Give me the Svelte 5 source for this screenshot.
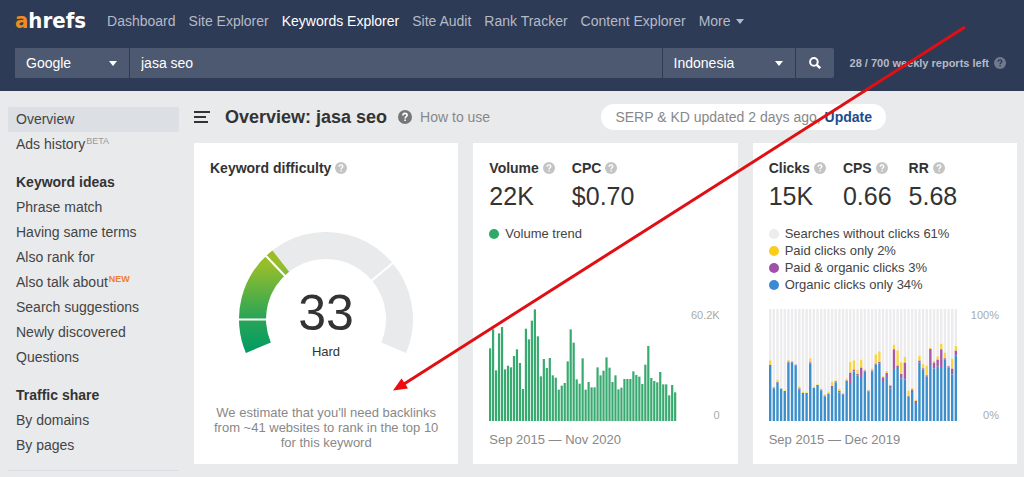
<script lang="ts">
	let engine = $state('Google');
	let country = $state('Indonesia');
	let query = $state('jasa seo');

	const nav = ['Dashboard', 'Site Explorer', 'Keywords Explorer', 'Site Audit', 'Rank Tracker', 'Content Explorer'];

	const menu = [
		{ title: '', items: [{ name: 'Overview', active: true }, { name: 'Ads history', badge: 'BETA' }] },
		{
			title: 'Keyword ideas',
			items: [
				{ name: 'Phrase match' },
				{ name: 'Having same terms' },
				{ name: 'Also rank for' },
				{ name: 'Also talk about', badge: 'NEW' },
				{ name: 'Search suggestions' },
				{ name: 'Newly discovered' },
				{ name: 'Questions' }
			]
		},
		{ title: 'Traffic share', items: [{ name: 'By domains' }, { name: 'By pages' }] }
	];

	// monthly volume, in thirds of a chart unit
	const volume = [
		218, 275, 152, 263, 282, 155, 166, 161, 195, 215, 174, 96, 277, 245, 301, 335, 254, 134, 186, 159, 189,
		137, 130, 94, 106, 114, 179, 275, 235, 125, 112, 188, 94, 117, 101, 101, 161, 137, 151, 191, 160, 117,
		137, 95, 100, 126, 126, 126, 149, 138, 133, 111, 169, 225, 129, 120, 116, 147, 110, 110, 77, 108, 86
	];

	// stacked: organic, + paid & organic, + paid
	const clicks = [
		[165, 168, 182], [98, 100, 103], [115, 117, 124], [97, 97, 98], [90, 90, 92], [176, 178, 183],
		[175, 178, 178], [166, 169, 169], [95, 98, 104], [81, 84, 88], [81, 84, 86], [172, 176, 188],
		[99, 99, 103], [105, 108, 110], [92, 94, 96], [74, 76, 80], [81, 82, 88], [102, 105, 118],
		[116, 119, 122], [86, 90, 97], [79, 81, 84], [117, 121, 127], [114, 145, 177], [149, 154, 182],
		[137, 141, 154], [129, 160, 184], [149, 151, 155], [88, 91, 94], [149, 152, 158], [169, 172, 200],
		[173, 177, 209], [120, 131, 134], [132, 144, 150], [98, 106, 109], [156, 215, 229], [162, 166, 212],
		[128, 141, 176], [124, 175, 192], [73, 75, 91], [87, 94, 99], [51, 60, 64], [175, 181, 196],
		[154, 158, 171], [133, 137, 166], [168, 216, 220], [157, 175, 180], [163, 184, 194], [162, 215, 232],
		[184, 188, 205], [160, 164, 166], [140, 157, 187], [196, 211, 225]
	];

	const legend = [
		{ name: 'Searches without clicks 61%', color: 'none' },
		{ name: 'Paid clicks only 2%', color: 'paid' },
		{ name: 'Paid & organic clicks 3%', color: 'both' },
		{ name: 'Organic clicks only 34%', color: 'organic' }
	];

	function point(deg: number, r: number) {
		const a = ((157 + deg) * Math.PI) / 180;
		return `${(87 + r * Math.cos(a)).toFixed(2)} ${(87 + r * Math.sin(a)).toFixed(2)}`;
	}

	// ring segment, degrees counted clockwise from the lower left end
	function arc(from: number, to: number) {
		const large = to - from > 180 ? 1 : 0;
		return `M${point(from, 87)} A87 87 0 ${large} 1 ${point(to, 87)} L${point(to, 60)} A60 60 0 ${large} 0 ${point(from, 60)}Z`;
	}
</script>

{#snippet help()}
	<svg class="help" width="12" height="12" viewBox="0 0 12 12" aria-hidden="true">
		<circle cx="6" cy="6" r="6" fill="currentColor" />
		<path class="mark" d="M4.2 4.7C4.2 3.5 5 2.9 6 2.9S7.8 3.6 7.8 4.6C7.8 5.7 6.1 5.8 6.1 7.2M6.1 8.2V9.5" fill="none" stroke-width="1.4" />
	</svg>
{/snippet}

{#snippet caret()}
	<svg class="caret" width="8" height="5" viewBox="0 0 8 5" aria-hidden="true"><path d="M0 0h8L4 5z" fill="currentColor" /></svg>
{/snippet}

<div class="page">
	<header>
		<nav class="top">
			<a href="#home" class="logo"><span>a</span>hrefs</a>
			{#each nav as item}
				<a href="#nav" class:current={item === 'Keywords Explorer'}>{item}</a>
			{/each}
			<a href="#more" class="more">More {@render caret()}</a>
		</nav>
		<div class="search">
			<form onsubmit={(e) => e.preventDefault()}>
				<label class="pick engine">
					<select bind:value={engine} aria-label="Search engine"><option>Google</option><option>YouTube</option></select>
					{@render caret()}
				</label>
				<input type="text" bind:value={query} aria-label="Keywords" />
				<label class="pick country">
					<select bind:value={country} aria-label="Country"><option>Indonesia</option><option>Malaysia</option></select>
					{@render caret()}
				</label>
				<button aria-label="Search">
					<svg width="12" height="12" viewBox="0 0 12 12"><circle cx="4.9" cy="4.9" r="3.8" fill="none" stroke="currentColor" stroke-width="2" /><path d="M7.8 7.8l3.4 3.4" stroke="currentColor" stroke-width="2.4" /></svg>
				</button>
			</form>
			<span class="quota">28 / 700 weekly reports left {@render help()}</span>
		</div>
	</header>

	<div class="body">
		<aside>
			{#each menu as group}
				{#if group.title}<h2>{group.title}</h2>{/if}
				{#each group.items as item}
					<a href="#menu" class:active={item.active}>{item.name}{#if item.badge}<span class="badge" class:new={item.badge === 'NEW'}>{item.badge}</span>{/if}</a>
				{/each}
			{/each}
		</aside>

		<main>
			<div class="title-row">
				<button class="burger" aria-label="Toggle menu">
					<svg width="16" height="12" viewBox="0 0 16 12"><path d="M0 1h16M0 6h12M0 11h14" stroke="currentColor" stroke-width="2" /></svg>
				</button>
				<h1>Overview: jasa seo</h1>
				<a href="#help" class="how">{@render help()} How to use</a>
				<div class="updated">SERP &amp; KD updated 2 days ago, <a href="#update">Update</a></div>
			</div>

			<div class="cards">
				<section class="card">
					<h3>Keyword difficulty {@render help()}</h3>
					<svg class="gauge" width="174" height="128" viewBox="0 0 174 128">
						<defs>
							<linearGradient id="kd" x1="0" y1="121" x2="0" y2="18" gradientUnits="userSpaceOnUse">
								<stop offset="0" stop-color="#009b62" />
								<stop offset="0.35" stop-color="#2ba556" />
								<stop offset="0.85" stop-color="#95be2b" />
								<stop offset="1" stop-color="#9fbb28" />
							</linearGradient>
						</defs>
						<path d={arc(0, 226)} fill="#e9eaec" />
						<path d={arc(0, 75)} fill="url(#kd)" />
						{#each [22.6, 69.4, 163] as deg}
							<path d="M{point(deg, 59)} L{point(deg, 88)}" stroke="#fff" stroke-width="2" />
						{/each}
						<text class="score" x="87" y="98">33</text>
						<text class="level" x="87" y="124">Hard</text>
					</svg>
					<p class="estimate">We estimate that you'll need backlinks<br />from ~41 websites to rank in the top 10<br />for this keyword</p>
				</section>

				<section class="card">
					<div class="stats">
						<div><h3>Volume {@render help()}</h3><strong>22K</strong></div>
						<div><h3>CPC {@render help()}</h3><strong>$0.70</strong></div>
					</div>
					<ul><li><i class="dot volume"></i>Volume trend</li></ul>
					<div class="chart">
						<svg width="188" height="112" viewBox="0 0 188 112">
							{#each volume as v, i}
								<rect x={i * 2.985} y={112 - v / 3} width="2.2" height={v / 3} fill="#38aa70" />
							{/each}
						</svg>
						<div class="axis"><span>60.2K</span><span>0</span></div>
					</div>
					<p class="period">Sep 2015 — Nov 2020</p>
				</section>

				<section class="card">
					<div class="stats">
						<div><h3>Clicks {@render help()}</h3><strong>15K</strong></div>
						<div><h3>CPS {@render help()}</h3><strong>0.66</strong></div>
						<div><h3>RR {@render help()}</h3><strong>5.68</strong></div>
					</div>
					<ul>
						{#each legend as l}
							<li><i class="dot {l.color}"></i>{l.name}</li>
						{/each}
					</ul>
					<div class="chart">
						<svg width="188" height="112" viewBox="0 0 188 112">
							{#each clicks as [organic, both, paid], i}
								<rect x={i * 3.64} y="0" width="2.4" height={112 - paid / 3} fill="#ececee" />
								<rect x={i * 3.64} y={112 - paid / 3} width="2.4" height={(paid - both) / 3} fill="#f5d547" />
								<rect x={i * 3.64} y={112 - both / 3} width="2.4" height={(both - organic) / 3} fill="#a659a8" />
								<rect x={i * 3.64} y={112 - organic / 3} width="2.4" height={organic / 3} fill="#3d8fcb" />
							{/each}
						</svg>
						<div class="axis"><span>100%</span><span>0%</span></div>
					</div>
					<p class="period">Sep 2015 — Dec 2019</p>
				</section>
			</div>
		</main>
	</div>

	<svg class="arrow" width="1024" height="477" viewBox="0 0 1024 477" aria-hidden="true">
		<path d="M965 27L404 384" stroke="#e00f14" stroke-width="3" />
		<path d="M393 390.5L401.5 378.5L405 383.5L408 388.5Z" fill="#f00a0e" />
	</svg>
</div>

<style>
	:global(body) {
		margin: 0;
		background: #e9eaec;
	}
	.page {
		position: relative;
		font-family: 'Liberation Sans', Arial, sans-serif;
		font-size: 14px;
		line-height: 20px;
		color: #333;
		overflow: hidden;
	}
	a {
		color: inherit;
		text-decoration: none;
	}
	h1,
	h2,
	h3,
	p,
	ul {
		margin: 0;
		padding: 0;
	}
	.mark {
		stroke: #fff;
	}

	header {
		background: #2e3b56;
		color: #b4bac6;
		padding-bottom: 13px;
	}
	.top {
		display: flex;
		align-items: center;
		gap: 13px;
		height: 42px;
		padding: 0 15px;
		margin-bottom: 6px;
	}
	.logo {
		font-family: 'DejaVu Sans Condensed', 'DejaVu Sans', sans-serif;
		font-size: 22px;
		font-weight: bold;
		color: #fff;
		margin-right: 8px;
	}
	.logo span {
		color: #f08b1d;
	}
	.current {
		color: #fff;
	}
	.more {
		display: flex;
		align-items: center;
		gap: 5px;
	}
	.search {
		display: flex;
		align-items: center;
		gap: 16px;
		padding: 0 18px 0 15px;
	}
	form {
		flex: 1;
		display: flex;
		gap: 1px;
		height: 30px;
	}
	form select,
	form input,
	form button {
		box-sizing: border-box;
		appearance: none;
		border: 0;
		border-radius: 0;
		margin: 0;
		height: 30px;
		padding: 0 11px;
		background: #4d5970;
		color: #fff;
		font: inherit;
	}
	form input {
		flex: 1;
		min-width: 0;
	}
	form select {
		width: 100%;
	}
	form button {
		display: flex;
		align-items: center;
		justify-content: center;
		width: 38px;
		border-radius: 0 2px 2px 0;
	}
	.pick {
		position: relative;
		color: #fff;
	}
	.pick .caret {
		position: absolute;
		right: 12px;
		top: 13px;
	}
	.engine {
		width: 114px;
	}
	.country {
		width: 132px;
	}
	.quota {
		display: flex;
		align-items: center;
		gap: 5px;
		font-size: 11px;
		font-weight: bold;
		white-space: nowrap;
	}
	.quota .help {
		color: #707a8d;
	}
	.quota .mark {
		stroke: #2e3b56;
	}

	.body {
		display: flex;
		gap: 15px;
		padding: 0 7px 0 8px;
	}
	aside {
		width: 171px;
		flex: none;
		padding-top: 16px;
		border-bottom: 1px solid #dcdee1;
		margin-bottom: 6px;
		box-sizing: border-box;
	}
	aside a,
	aside h2 {
		display: block;
		padding: 0 8px;
		font-size: 14px;
		line-height: 25px;
		color: #444;
		white-space: nowrap;
	}
	aside h2 {
		margin-top: 13px;
		color: #333;
	}
	aside a.active {
		background: #dcdfe3;
		border-radius: 2px;
	}
	.badge {
		font-size: 9px;
		line-height: 10px;
		vertical-align: 5px;
		margin-left: 1px;
		color: #999;
	}
	.new {
		color: #f08030;
		font-weight: bold;
	}

	main {
		flex: 1;
		min-width: 0;
		padding-bottom: 13px;
	}
	.title-row {
		display: flex;
		align-items: center;
		height: 52px;
	}
	.burger {
		display: flex;
		border: 0;
		padding: 0;
		background: none;
		color: #333;
	}
	h1 {
		font-size: 18px;
		margin: 0 11px 0 15px;
		white-space: nowrap;
	}
	.how {
		display: flex;
		align-items: center;
		gap: 8px;
		color: #888;
		white-space: nowrap;
	}
	.how .help {
		width: 14px;
		height: 14px;
		color: #777;
	}
	.updated {
		margin: 0 131px 0 auto;
		padding: 3px 14px;
		border-radius: 13px;
		background: #fff;
		color: #888;
		white-space: nowrap;
	}
	.updated a {
		font-weight: bold;
		color: #1c4c8c;
	}

	.cards {
		display: grid;
		grid-template-columns: repeat(3, 1fr);
		gap: 15px;
	}
	.card {
		display: flex;
		flex-direction: column;
		background: #fff;
		padding: 15px 16px 14px;
	}
	h3 {
		display: flex;
		align-items: center;
		gap: 4px;
		font-size: 14px;
		line-height: 20px;
	}
	h3 .help {
		color: #c4c4c4;
	}
	.stats {
		display: flex;
		gap: 17px;
	}
	.stats strong {
		display: block;
		margin-top: 3px;
		font-size: 25px;
		line-height: 30px;
		font-weight: normal;
	}
	.gauge {
		align-self: center;
		margin-top: 54px;
	}
	.gauge text {
		text-anchor: middle;
		fill: #333;
	}
	.score {
		font-size: 50px;
	}
	.level {
		font-size: 13px;
	}
	.estimate {
		margin-top: auto;
		font-size: 13px;
		line-height: 15px;
		text-align: center;
		color: #888;
	}
	ul {
		list-style: none;
		margin-top: 14px;
	}
	li {
		display: flex;
		align-items: center;
		gap: 6px;
		font-size: 13px;
		line-height: 17px;
		color: #444;
	}
	.dot {
		width: 10px;
		height: 10px;
		border-radius: 50%;
		background: #ececee;
	}
	.volume {
		background: #2fa968;
	}
	.paid {
		background: #f8cd1c;
	}
	.both {
		background: #a050a8;
	}
	.organic {
		background: #3b8bd4;
	}
	.chart {
		display: flex;
		justify-content: space-between;
		margin-top: auto;
		padding-top: 16px;
	}
	.axis {
		display: flex;
		flex-direction: column;
		justify-content: space-between;
		text-align: right;
		font-size: 11px;
		line-height: 12px;
		color: #aaa;
		margin-right: 2px;
	}
	.period {
		margin-top: 9px;
		font-size: 13px;
		color: #888;
	}
	.arrow {
		position: absolute;
		left: 0;
		top: 0;
		pointer-events: none;
	}
</style>
